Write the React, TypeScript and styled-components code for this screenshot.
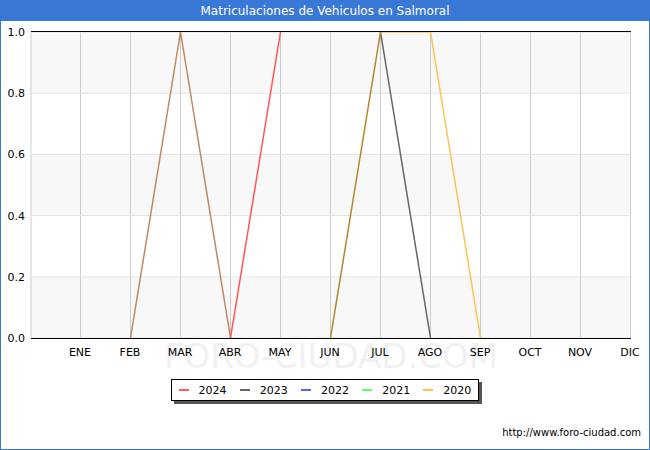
import React from 'react'
import styled, { createGlobalStyle } from 'styled-components'

const Global = createGlobalStyle`
  body { margin: 0; font-family: "DejaVu Sans", sans-serif; }
`

const months = ['ENE','FEB','MAR','ABR','MAY','JUN','JUL','AGO','SEP','OCT','NOV','DIC']
const X = (m: number) => 29.5 + 50 * m
const Y = (v: number) => 337 - 306 * v

const series: { color: string; pts: [number, number][] }[] = [
  { color: '#c08860', pts: [[2,0],[3,1],[4,0]] },
  { color: '#ff5555', pts: [[4,0],[5,1]] },
  { color: '#666666', pts: [[7,1],[8,0]] },
  { color: '#fdc15a', pts: [[7,1],[8,1],[9,0]] },
  { color: '#b8862a', pts: [[6,0],[7,1]] },
]

const legend = [
  ['2024', '#ff6060'], ['2023', '#666'], ['2022', '#6060ff'], ['2021', '#60ff60'], ['2020', '#ffc050'],
]

const App: React.FC = () => (
  <Frame>
    <Global />
    <Title>Matriculaciones de Vehiculos en Salmoral</Title>
    <svg width={648} height={428} style={{ display: 'block' }}>
      <g transform="translate(0,-20)">
        {[0,1,2,3,4].map(i => (
          <rect key={i} x={30} y={Y(1) + i * 61.2} width={600} height={61.2} fill={i % 2 ? '#ffffff' : '#f8f8f8'} />
        ))}
        {months.map((m, i) => (
          <g key={m}>
            <line x1={X(i + 1)} x2={X(i + 1)} y1={31} y2={337} stroke="#ccc" />
            <text x={X(i + 1) - 0.5} y={355} fontSize={11} textAnchor="middle" fill="#000">{m}</text>
          </g>
        ))}
        <line x1={30} x2={30} y1={31} y2={337} stroke="#ccc" />
        {[0,0.2,0.4,0.6,0.8,1].map(v => (
          <g key={v}>
            <line x1={30} x2={630} y1={Y(v)} y2={Y(v)} stroke="#e4e4e4" />
            <text x={24} y={Y(v) + 4} fontSize={11} textAnchor="end">{v.toFixed(1)}</text>
          </g>
        ))}
        <text x={330} y={367} fontSize={34} textAnchor="middle" fill="#000" opacity={0.05}>FORO-CIUDAD.COM</text>
        {series.map((s, i) => (
          <polyline key={i} fill="none" stroke={s.color} strokeWidth={1.5}
            points={s.pts.map(([m, v]) => `${X(m)},${Y(v)}`).join(' ')} />
        ))}
        <line x1={30} x2={630} y1={30.5} y2={30.5} stroke="#000" />
        <line x1={30} x2={630} y1={337.5} y2={337.5} stroke="#000" />
      </g>
    </svg>
    <Legend>
      {legend.map(([l, c]) => (
        <Item key={l}><Swatch $c={c} />{l}</Item>
      ))}
    </Legend>
    <Url>http://www.foro-ciudad.com</Url>
  </Frame>
)

export default App

const Frame = styled.div`
  position: relative;
  width: 648px;
  height: 448px;
  border: 1px solid #3a78d8;
  background: #fff;
  overflow: hidden;
`
const Title = styled.div`
  height: 20px;
  background: #3a78d8;
  color: #fff;
  font-size: 12px;
  line-height: 21px;
  text-align: center;
`
const Legend = styled.div`
  position: absolute;
  left: 170px;
  top: 378px;
  width: 306px;
  height: 20px;
  border: 1px solid #000;
  box-shadow: 3px 3px 0 #555;
  background: #fff;
  display: flex;
  align-items: center;
  justify-content: space-around;
  font-size: 11px;
`
const Item = styled.div`
  display: flex;
  align-items: center;
  gap: 10px;
`
const Swatch = styled.span<{ $c: string }>`
  width: 10px;
  height: 2px;
  background: ${p => p.$c};
`
const Url = styled.div`
  position: absolute;
  right: 8px;
  top: 426px;
  font-size: 10px;
`
